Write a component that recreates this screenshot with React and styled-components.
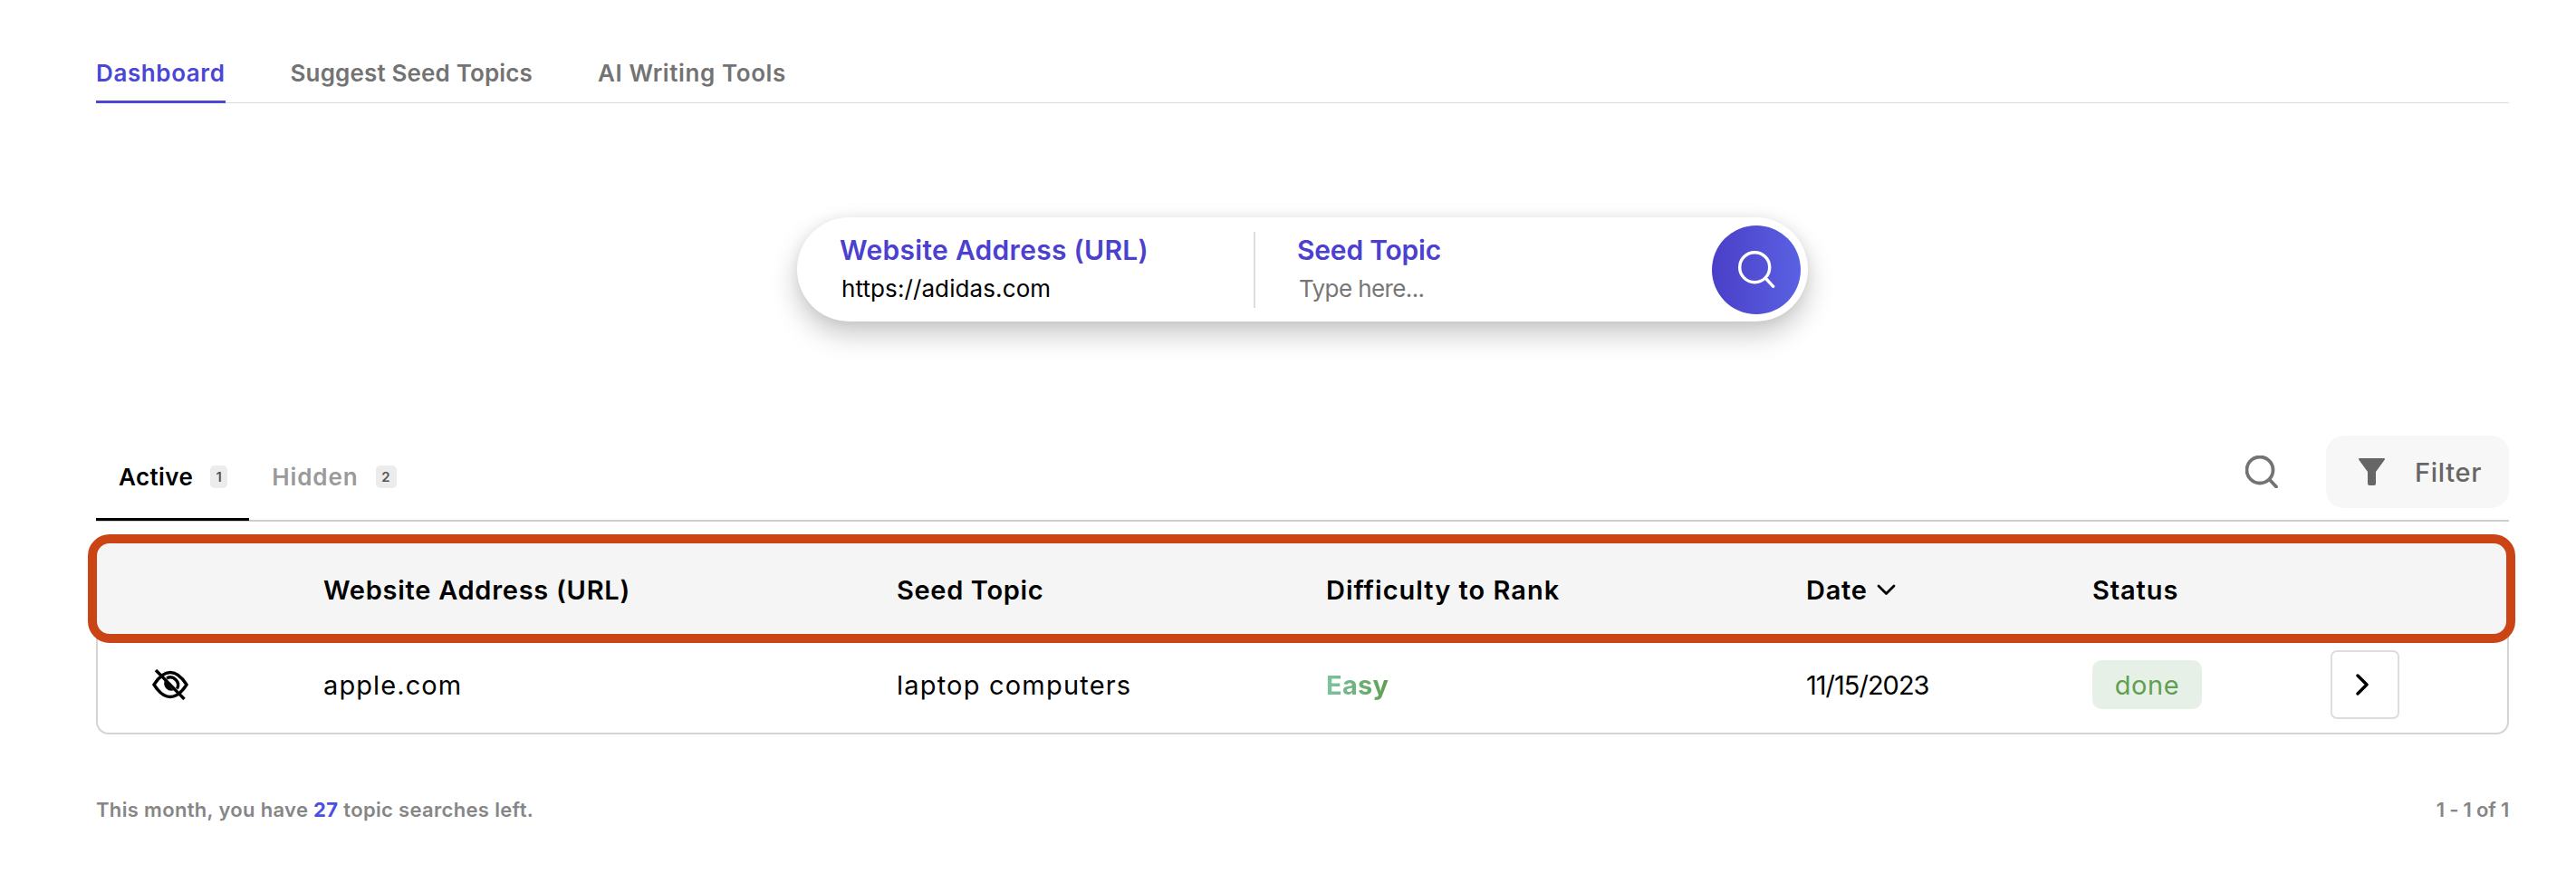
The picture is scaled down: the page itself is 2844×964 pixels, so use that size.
import React from "react";
import styled, { createGlobalStyle } from "styled-components";

const Global = createGlobalStyle`
  html, body { margin: 0; padding: 0; background: #fff; }
  body { font-family: "Inter", "Liberation Sans", sans-serif; }
`;

const Page = styled.div`
  width: 2844px;
  height: 964px;
  box-sizing: border-box;
  padding: 50px 74px 0 106px;
  overflow: hidden;
`;

const Nav = styled.nav`
  display: flex;
  gap: 72px;
  height: 64px;
  box-sizing: border-box;
  border-bottom: 1px solid #dcdcdc;
`;

const NavItem = styled.a`
  height: 64px;
  box-sizing: border-box;
  padding-top: 14px;
  font-size: 26px;
  line-height: 34px;
  font-weight: 600;
  letter-spacing: ${(p) => p.$ls || 0}px;
  color: ${(p) => (p.$active ? "#4b46d6" : "#737373")};
  border-bottom: ${(p) => (p.$active ? "3px solid #4b46d6" : "none")};
`;

const SearchRow = styled.div`
  display: flex;
  justify-content: center;
  margin: 126px 0 0 0;
`;

const Pill = styled.form`
  width: 1116px;
  height: 115px;
  box-sizing: border-box;
  border-radius: 58px;
  background: #fff;
  box-shadow: 0 14px 30px rgba(0, 0, 0, 0.22), 0 0 14px rgba(0, 0, 0, 0.06);
  display: flex;
  align-items: center;
  padding: 0 8px 0 47px;
`;

const Field = styled.div`
  display: flex;
  flex-direction: column;
  height: 84px;
  box-sizing: border-box;
  padding-bottom: 1px;
  justify-content: center;
  gap: 6px;
`;

const UrlField = styled(Field)`
  width: 457px;
`;

const TopicField = styled(Field)`
  flex: 1;
  padding-left: 46px;
  border-left: 2px solid #dddddd;
`;

const FieldLabel = styled.label`
  font-size: 30px;
  line-height: 38px;
  font-weight: 600;
  color: #4b40cf;
  letter-spacing: ${(p) => p.$ls || 0}px;
`;

const FieldValue = styled.div`
  font-size: 26px;
  line-height: 36px;
  margin-left: 2px;
  letter-spacing: ${(p) => p.$ls || 0}px;
  color: ${(p) => (p.$placeholder ? "#777777" : "#000000")};
`;

const SearchButton = styled.button`
  width: 98px;
  height: 98px;
  border: 0;
  padding: 0;
  border-radius: 50%;
  background: linear-gradient(90deg, #4a3fc8, #5a61e3);
  display: flex;
  align-items: center;
  justify-content: center;
`;

const TabsBar = styled.div`
  display: flex;
  align-items: flex-end;
  justify-content: space-between;
  height: 93px;
  margin-top: 126px;
  border-bottom: 2px solid #cfcfcf;
`;

const Tabs = styled.div`
  display: flex;
  height: 93px;
`;

const Tab = styled.div`
  display: flex;
  align-items: flex-start;
  box-sizing: border-box;
  padding: 29px 24px 0 25px;
  margin-bottom: -1px;
  height: 94px;
  gap: 19px;
  border-bottom: ${(p) => (p.$active ? "3px solid #000" : "none")};
  color: ${(p) => (p.$active ? "#000" : "#9a9a9a")};
  font-size: 26px;
  line-height: 34px;
  font-weight: 600;
  letter-spacing: ${(p) => (p.$active ? 0.4 : 0.9)}px;
`;

const Badge = styled.span`
  display: flex;
  align-items: center;
  justify-content: center;
  width: ${(p) => p.$w}px;
  height: 25px;
  box-sizing: border-box;
  margin-top: 4px;
  border-radius: 5px;
  background: #ececec;
  color: #555;
  font-size: 15px;
  font-weight: 600;
  letter-spacing: 0;
`;

const Tools = styled.div`
  display: flex;
  align-items: flex-start;
  height: 93px;
  gap: 53px;
`;

const IconSearch = styled.div`
  display: flex;
  margin-top: 22px;
`;

const FilterButton = styled.button`
  width: 202px;
  height: 80px;
  box-sizing: border-box;
  border: 0;
  border-radius: 20px;
  background: #f7f7f7;
  display: flex;
  align-items: center;
  padding: 0 0 0 36px;
  gap: 33px;
  color: #666;
  font-family: inherit;
  font-size: 29px;
  font-weight: 500;
  letter-spacing: 0.7px;
`;

const Table = styled.div`
  margin-top: 24px;
  box-sizing: border-box;
  height: 211px;
  border: 2px solid #d4d4d4;
  border-top: 0;
  border-radius: 14px;
  position: relative;
`;

const Row = styled.div`
  display: grid;
  grid-template-columns: 249px 633px 474px 530px 316px 263px 1fr;
  align-items: center;
`;

const HeaderRow = styled(Row)`
  height: 100px;
  background: #f5f5f5;
  margin: 0 1px 0 -2px;
  padding: 2px 0 0 2px;
  box-sizing: border-box;
  position: relative;
  font-size: 29px;
  font-weight: 600;
  color: #000;
`;

const Highlight = styled.div`
  position: absolute;
  inset: -10px -10px -10px -9px;
  border: 10px solid #cb4415;
  border-radius: 24px;
  pointer-events: none;
`;

const HeadCell = styled.div`
  display: flex;
  align-items: center;
  gap: 10px;
  letter-spacing: ${(p) => p.$ls || 0}px;
`;

const BodyRow = styled(Row)`
  height: 109px;
  box-sizing: border-box;
  padding-top: 3px;
  font-size: 29px;
  color: #000;
`;

const BodyCell = styled.div`
  display: flex;
  align-items: center;
  letter-spacing: ${(p) => p.$ls || 0}px;
`;

const EyeCell = styled(BodyCell)`
  padding-left: 60px;
`;

const Easy = styled.span`
  font-weight: 700;
  letter-spacing: 0.3px;
  background: linear-gradient(90deg, #7fc2a4, #5f9f52);
  -webkit-background-clip: text;
  background-clip: text;
  color: transparent;
`;

const StatusPill = styled.span`
  display: flex;
  align-items: center;
  justify-content: center;
  width: 121px;
  height: 54px;
  border-radius: 10px;
  background: #e7f0e7;
  color: #5f9f52;
  letter-spacing: 0.6px;
`;

const RowButton = styled.button`
  width: 76px;
  height: 76px;
  padding: 0 6px 0 0;
  box-sizing: border-box;
  border: 2px solid #dddddd;
  border-radius: 7px;
  background: #fff;
  display: flex;
  align-items: center;
  justify-content: center;
`;

const Footer = styled.footer`
  display: flex;
  justify-content: space-between;
  margin-top: 69px;
  font-size: 22px;
  line-height: 28px;
  font-weight: 600;
  letter-spacing: 0.33px;
  color: #868686;
`;

const PageRange = styled.span`
  letter-spacing: -0.2px;
`;

const Count = styled.b`
  color: #4b50e0;
  font-weight: 700;
`;

const Magnifier = ({ size, color, width }) => (
  <svg width={size} height={size} viewBox="0 0 36 36" fill="none" stroke={color} strokeWidth={width} strokeLinecap="round">
    <circle cx="16" cy="16" r="14.500" />
    <path d="M27 27l7 7.500" />
  </svg>
);

const Funnel = () => (
  <svg width="29" height="30" viewBox="0 0 29 30" fill="#666">
    <path d="M1 0h27a1 1 0 0 1 .8 1.600L19 15v13a2 2 0 0 1-2 2h-5a2 2 0 0 1-2-2V15L.2 1.600A1 1 0 0 1 1 0z" />
  </svg>
);

const EyeOff = () => (
  <svg width="40" height="34" viewBox="0 0 40 34" fill="none" stroke="#000" strokeWidth="3.400">
    <path d="M2 17C8 7.500 14 3.500 20 3.500S32 7.500 38 17c-6 9.500-12 13.500-18 13.500S8 26.500 2 17z" />
    <path d="M16 10a8.500 8.500 0 0 1 11.500 11.500" />
    <path d="M14 14L22.500 23A7.500 7.500 0 0 1 14 14z" fill="#000" strokeWidth="1.200" />
    <path d="M4 1l31.500 32" />
  </svg>
);

const ChevronRight = () => (
  <svg width="14" height="24" viewBox="0 0 14 24" fill="none" stroke="#000" strokeWidth="3.400" strokeLinecap="round" strokeLinejoin="round">
    <path d="M2 2l10 10L2 22" />
  </svg>
);

const ChevronDown = () => (
  <svg width="21" height="13" viewBox="0 0 21 13" fill="none" stroke="#000" strokeWidth="2.800" strokeLinecap="round" strokeLinejoin="round">
    <path d="M2 2l8.500 8.500L19 2" />
  </svg>
);

export default function App() {
  return (
    <Page>
      <Global />
      <Nav>
        <NavItem $active $ls={0.6}>Dashboard</NavItem>
        <NavItem $ls={0.15}>Suggest Seed Topics</NavItem>
        <NavItem $ls={0.6}>AI Writing Tools</NavItem>
      </Nav>

      <SearchRow>
        <Pill>
          <UrlField>
            <FieldLabel $ls={0.3}>Website Address (URL)</FieldLabel>
            <FieldValue $ls={0.1}>https://adidas.com</FieldValue>
          </UrlField>
          <TopicField>
            <FieldLabel $ls={-0.2}>Seed Topic</FieldLabel>
            <FieldValue $placeholder $ls={-0.6}>Type here...</FieldValue>
          </TopicField>
          <SearchButton aria-label="Search">
            <Magnifier size={41} color="#fff" width={3} />
          </SearchButton>
        </Pill>
      </SearchRow>

      <TabsBar>
        <Tabs>
          <Tab $active>Active<Badge $w={19}>1</Badge></Tab>
          <Tab>Hidden<Badge $w={23}>2</Badge></Tab>
        </Tabs>
        <Tools>
          <IconSearch><Magnifier size={36} color="#737373" width={3.8} /></IconSearch>
          <FilterButton><Funnel />Filter</FilterButton>
        </Tools>
      </TabsBar>

      <Table>
        <HeaderRow>
          <HeadCell />
          <HeadCell $ls={0.73}>Website Address (URL)</HeadCell>
          <HeadCell $ls={0.66}>Seed Topic</HeadCell>
          <HeadCell $ls={1}>Difficulty to Rank</HeadCell>
          <HeadCell $ls={0.7}>Date <ChevronDown /></HeadCell>
          <HeadCell $ls={0.9}>Status</HeadCell>
          <HeadCell />
          <Highlight />
        </HeaderRow>
        <BodyRow>
          <EyeCell><EyeOff /></EyeCell>
          <BodyCell $ls={1.1}>apple.com</BodyCell>
          <BodyCell $ls={1.2}>laptop computers</BodyCell>
          <BodyCell><Easy>Easy</Easy></BodyCell>
          <BodyCell $ls={-1}>11/15/2023</BodyCell>
          <BodyCell><StatusPill>done</StatusPill></BodyCell>
          <BodyCell><RowButton aria-label="Open"><ChevronRight /></RowButton></BodyCell>
        </BodyRow>
      </Table>

      <Footer>
        <span>This month, you have <Count>27</Count> topic searches left.</span>
        <PageRange>1 - 1 of 1</PageRange>
      </Footer>
    </Page>
  );
}
